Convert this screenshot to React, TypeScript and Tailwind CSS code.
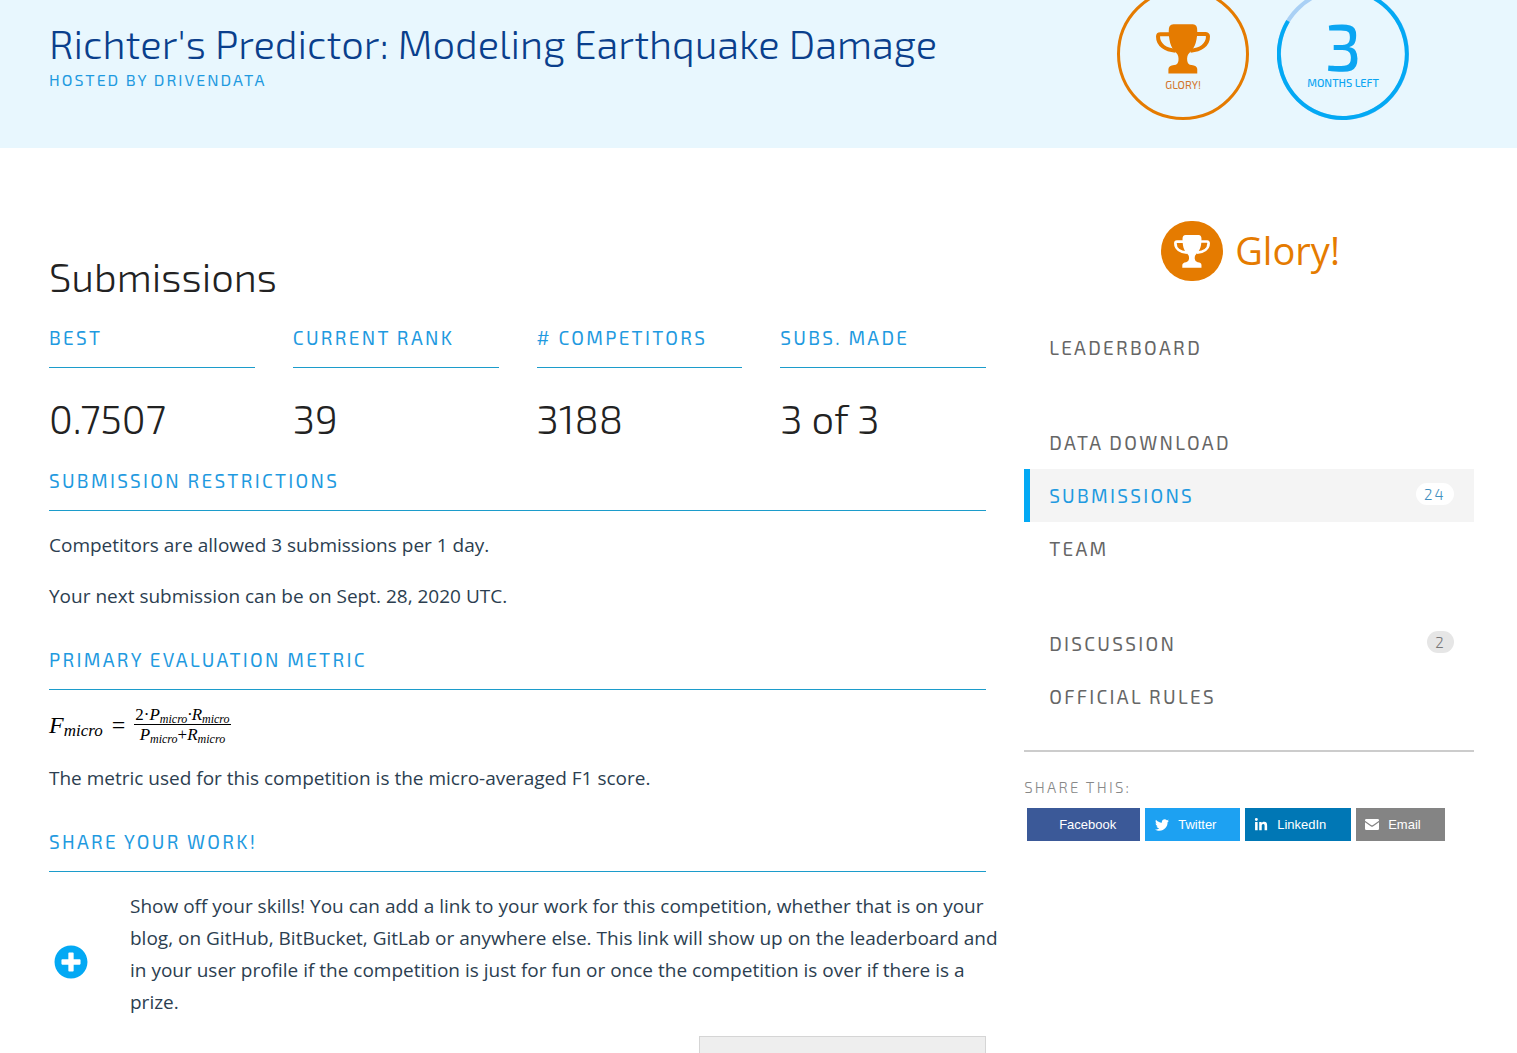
import type { ReactNode } from "react";
import { FaLinkedinIn, FaPlusCircle, FaTwitter } from "react-icons/fa";

const display = "font-['Exo_2','Open_Sans',sans-serif]";

function Trophy({ className }: { className: string }) {
  return (
    <svg viewBox="0 0 161 148" className={className} fill="currentColor" aria-hidden="true">
      <path d="M52 0H110Q124 1 123 20C123 60 110 75 100 85C94 91 92 98 93 108Q94 120 106 122Q122 123 123 134V147H37V134Q38 124 54 122Q66 120 67 108C68 98 66 91 60 85C50 75 38 60 38 20Q37 1 52 0Z" />
      <path
        d="M40 30H13Q6 30 6 37C6 62 28 77 58 79M121 29H148Q155 30 155 37C155 62 133 77 103 79"
        fill="none"
        stroke="currentColor"
        strokeWidth="12"
      />
    </svg>
  );
}

function Envelope() {
  return (
    <svg viewBox="0 0 44 34" className="h-[11px] w-[14px]" fill="currentColor" aria-hidden="true">
      <path d="M4 0H40Q44 0 44 4V5L24 19Q22 20 20 19L0 5V4Q0 0 4 0ZM0 10L19 23Q22 25 25 23L44 10V30Q44 34 40 34H4Q0 34 0 30Z" />
    </svg>
  );
}

function SectionHeading({ children }: { children: ReactNode }) {
  return (
    <h3 className={`${display} border-b border-[#1c9ccb] pb-[17px] text-[19px] leading-6 tracking-[0.12em] text-[#1f9ae0] uppercase`}>
      {children}
    </h3>
  );
}

function Sub({ children }: { children: ReactNode }) {
  return <span className="mt-2 text-[12px] leading-3">{children}</span>;
}

function Formula() {
  return (
    <div className="mt-[14px] flex h-[42px] items-center font-['Liberation_Serif',serif] text-black italic">
      <span className="text-[24px] leading-6">F</span>
      <span className="mt-3 text-[17px] leading-4">micro</span>
      <span className="mx-[9px] text-[24px] leading-6 not-italic">=</span>
      <span className="flex flex-col items-center text-[17px] leading-5">
        <span className="flex h-5 items-center border-b border-black px-px">
          <span className="not-italic">2·</span>
          <span>P</span>
          <Sub>micro</Sub>
          <span>·R</span>
          <Sub>micro</Sub>
        </span>
        <span className="flex h-5 items-center">
          <span>P</span>
          <Sub>micro</Sub>
          <span className="not-italic">+</span>
          <span>R</span>
          <Sub>micro</Sub>
        </span>
      </span>
    </div>
  );
}

const stats = [
  { label: "Best", value: "0.7507" },
  { label: "Current Rank", value: "39" },
  { label: "# Competitors", value: "3188" },
  { label: "Subs. Made", value: "3 of 3" },
];

const navGroups = [
  [{ label: "Leaderboard" }],
  [{ label: "Data Download" }, { label: "Submissions", badge: "24", active: true }, { label: "Team" }],
  [{ label: "Discussion", badge: "2" }, { label: "Official Rules" }],
] as { label: string; badge?: string; active?: boolean }[][];

function NavLink({ label, badge, active }: { label: string; badge?: string; active?: boolean }) {
  return (
    <a
      href="#"
      aria-current={active ? "page" : undefined}
      className={`flex h-[53px] items-center justify-between border-l-[6px] pr-5 pl-[19px] ${
        active ? "border-[#03a9f4] bg-[#f4f4f4] text-[#1f9ae0]" : "border-transparent text-[#666]"
      }`}
    >
      <span className="text-[19px] leading-6 tracking-[0.12em] uppercase">{label}</span>
      {badge && (
        <span
          className={`mb-1 rounded-full px-2 text-[15px] leading-[22px] font-light tracking-[0.15em] ${
            active ? "bg-white text-[#3f8fc0]" : "bg-[#e6e6e6] text-[#777]"
          }`}
        >
          {badge}
        </span>
      )}
    </a>
  );
}

const columns = "grid grid-cols-[minmax(0,25fr)_minmax(0,12fr)] gap-x-[38px] pr-[43px] pl-[49px]";
const shareButton = "flex h-[33px] items-center text-[13px] text-white font-['Liberation_Sans',sans-serif]";

export default function App() {
  return (
    <div className="h-screen overflow-hidden bg-white font-['Open_Sans',sans-serif] text-[19px] leading-8 text-[#2c3e50]">
      <header className={`${columns} ${display} h-[148px] overflow-hidden bg-[#e8f7fe]`}>
        <div className="pt-[19px]">
          <h1 className="text-[40px] leading-[48px] font-light whitespace-nowrap text-[#0a3f8c]">
            Richter's Predictor: Modeling Earthquake Damage
          </h1>
          <p className="text-[16px] leading-[26px] tracking-[2px] text-[#1f9ae0] uppercase">Hosted by DrivenData</p>
        </div>
        <div className="-mt-3 flex justify-center gap-7 pl-7">
          <div className="flex size-[132px] shrink-0 flex-col items-center rounded-full border-[3px] border-[#e57b00] pt-[33px] text-[#e57b00]">
            <Trophy className="h-[50px] w-[54px]" />
            <span className="mt-[3px] text-[11px] leading-4 text-[#d2752b]">GLORY!</span>
          </div>
          <div className="relative flex size-[132px] shrink-0 flex-col items-center pt-[25px] text-[#0ba5f2]">
            <svg viewBox="0 0 132 132" className="absolute inset-0 size-full" fill="none" aria-hidden="true">
              <circle cx="66" cy="66" r="64" stroke="#a9d0f5" strokeWidth="4" />
              <path d="M66 2A64 64 0 1 1 11 33" stroke="#03a9f4" strokeWidth="4" />
            </svg>
            <span className="text-[66px] leading-[63px] font-medium">3</span>
            <span className="text-[11px] leading-[14px] font-medium whitespace-nowrap">MONTHS LEFT</span>
          </div>
        </div>
      </header>

      <div className={columns}>
        <main className="pt-[104px]">
          <h2 className={`${display} text-[40px] leading-[48px] font-light text-[#222]`}>Submissions</h2>
          <div className="mt-[26px] grid grid-cols-4 gap-x-[38px]">
            {stats.map((s) => (
              <div key={s.label}>
                <SectionHeading>{s.label}</SectionHeading>
                <p className={`${display} mt-[26px] text-[40px] leading-[48px] font-light text-[#222]`}>{s.value}</p>
              </div>
            ))}
          </div>

          <section className="mt-[27px]">
            <SectionHeading>Submission Restrictions</SectionHeading>
            <p className="mt-[18px]">Competitors are allowed 3 submissions per 1 day.</p>
            <p className="mt-[19px]">Your next submission can be on Sept. 28, 2020 UTC.</p>
          </section>

          <section className="mt-9">
            <SectionHeading>Primary Evaluation Metric</SectionHeading>
            <Formula />
            <p className="mt-4">The metric used for this competition is the micro-averaged F1 score.</p>
          </section>

          <section className="mt-9">
            <SectionHeading>Share Your Work!</SectionHeading>
            <div className="mt-[18px] flex">
              <div className="flex w-[81px] shrink-0 items-center pt-4 pl-[5px]">
                <button type="button" aria-label="Add a link to your work">
                  <FaPlusCircle className="size-[34px] text-[#03a9f4]" />
                </button>
              </div>
              <p className="-mr-4 min-w-0 flex-1">
                Show off your skills! You can add a link to your work for this competition, whether that is on your
                blog, on GitHub, BitBucket, GitLab or anywhere else. This link will show up on the leaderboard and in
                your user profile if the competition is just for fun or once the competition is over if there is a
                prize.
              </p>
            </div>
            <button
              type="button"
              aria-label="Add link"
              className="mt-[18px] ml-auto block h-12 w-[287px] border border-[#d5d5d5] bg-[#eee]"
            />
          </section>
        </main>

        <aside className="pt-[73px]">
          <div className="flex h-[60px] items-center justify-center gap-3 pl-[3px] text-[#e57b00]">
            <span className="flex h-[60px] w-[62px] items-center justify-center rounded-full bg-[#e57b00] text-white">
              <Trophy className="h-[33px] w-9" />
            </span>
            <span className="pb-[3px] text-[38px] leading-[48px]">Glory!</span>
          </div>

          <nav className={`${display} mt-10 flex flex-col gap-[42px]`}>
            {navGroups.map((group) => (
              <div key={group[0].label}>
                {group.map((item) => (
                  <NavLink key={item.label} {...item} />
                ))}
              </div>
            ))}
          </nav>

          <div className="mt-[27px] border-t-2 border-[#ccc] pt-[23px]">
            <p className={`${display} text-[15px] leading-6 font-light tracking-[0.15em] text-[#888]`}>SHARE THIS:</p>
            <div className="mt-[9px] ml-[3px] flex gap-[5px]">
              <button type="button" className={`${shareButton} w-[113px] bg-[#3b5998] pl-8`}>
                Facebook
              </button>
              <button type="button" className={`${shareButton} w-[95px] gap-[9px] bg-[#1da1f2] pl-[10px]`}>
                <FaTwitter className="size-[14px]" />
                Twitter
              </button>
              <button type="button" className={`${shareButton} w-[106px] gap-[9px] bg-[#0077b5] pl-[9px]`}>
                <FaLinkedinIn className="size-[14px]" />
                LinkedIn
              </button>
              <button type="button" className={`${shareButton} w-[89px] gap-[9px] bg-[#848484] pl-[9px]`}>
                <Envelope />
                Email
              </button>
            </div>
          </div>
        </aside>
      </div>
    </div>
  );
}
